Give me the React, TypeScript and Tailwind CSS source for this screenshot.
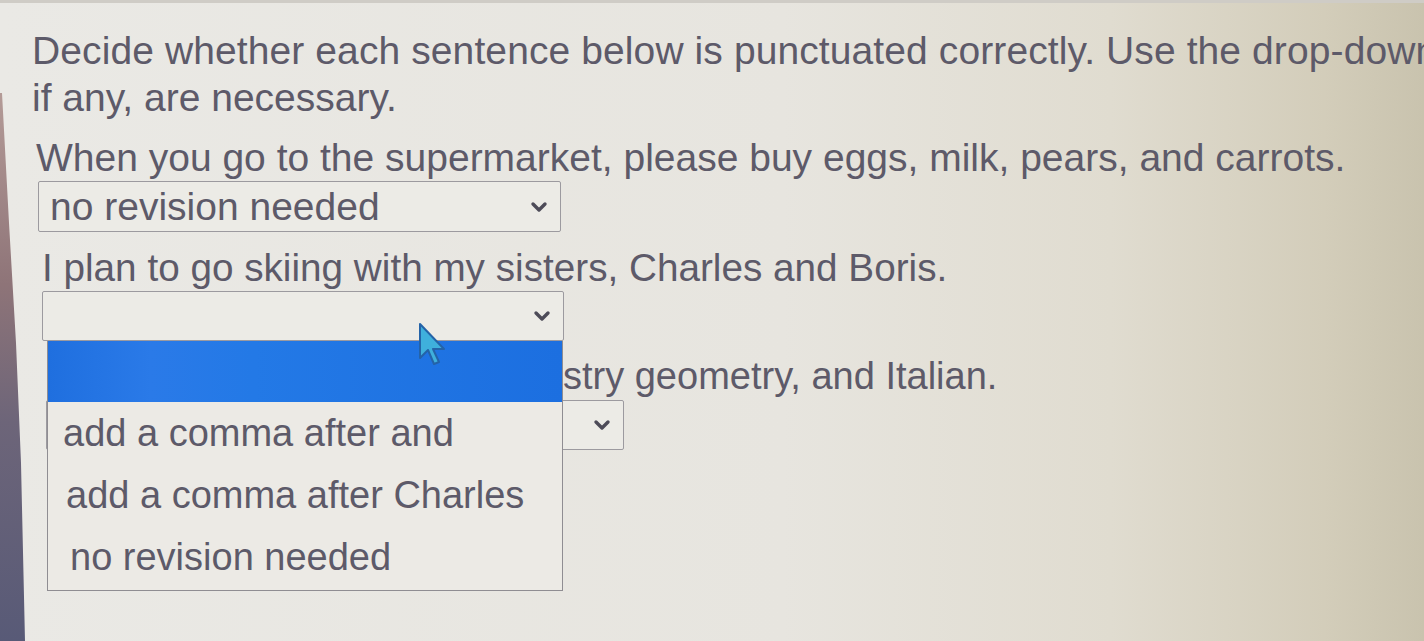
import React from 'react';

const Chevron = () => (
  <svg width="18" height="12" viewBox="0 0 18 12" className="shrink-0">
    <path d="M3 3 L9 9 L15 3" fill="none" stroke="#4d4b58" strokeWidth="3.4" strokeLinecap="round" strokeLinejoin="round" />
  </svg>
);

const Select = ({ value, className }: { value?: string; className: string }) => (
  <div className={`flex items-center justify-between border border-[#9c9a9f] rounded-[2px] bg-[#ecebe6] pl-[11px] pr-[12px] ${className}`}>
    <span className="text-[39px] leading-none text-[#5d5a69]">{value}</span>
    <Chevron />
  </div>
);

const options = [
  { label: 'add a comma after and', pad: 'pl-[15px]' },
  { label: 'add a comma after Charles', pad: 'pl-[18px]' },
  { label: 'no revision needed', pad: 'pl-[22px]' },
];

export default function App() {
  return (
    <div
      className="w-[1424px] h-[641px] overflow-hidden flex flex-col bg-[linear-gradient(90deg,#eae9e5_0%,#e7e5df_55%,#e0dcd0_78%,#d3cdba_93%,#c9c3ae_100%)]"
      style={{ fontFamily: '"Liberation Sans", Arial, sans-serif' }}
    >
      <div className="h-[3px] bg-[#cfccc6] shrink-0" />
      <div className="flex flex-1 min-h-0">
        {/* monitor bezel creeping in on the left */}
        <div className="w-[28px] shrink-0">
          <svg width="28" height="638" viewBox="0 0 28 638">
            <defs>
              <linearGradient id="bezel" x1="0" y1="0" x2="0" y2="1">
                <stop offset="0" stopColor="#b49b97" />
                <stop offset="0.35" stopColor="#8e7478" />
                <stop offset="0.6" stopColor="#6d6579" />
                <stop offset="1" stopColor="#585a77" />
              </linearGradient>
            </defs>
            <polygon points="0,90 2,90 9,220 16,340 21,460 25,638 0,638" fill="url(#bezel)" />
          </svg>
        </div>

        <div className="flex-1 flex flex-col pt-[24px] text-[39px] leading-[47px] text-[#5d5a69] whitespace-nowrap">
          <div className="ml-[4px] tracking-[0.1px]">
            Decide whether each sentence below is punctuated correctly. Use the drop-down menus to choose which revisions,
          </div>
          <div className="ml-[4px]">if any, are necessary.</div>

          <div className="ml-[8px] mt-[13px]">
            When you go to the supermarket, please buy eggs, milk, pears, and carrots.
          </div>
          <Select value="no revision needed" className="ml-[10px] w-[523px] h-[51px]" />

          <div className="ml-[14px] mt-[12px] text-[38.7px]">I plan to go skiing with my sisters, Charles and Boris.</div>

          <div className="relative ml-[14px] w-[522px] z-10">
            <Select className="w-[522px] h-[50px]" />
            {/* open option list */}
            <div className="absolute left-[5px] top-[50px] w-[516px] h-[250px] border border-[#8f8d92] border-t-0 bg-[#eceae5] flex flex-col">
              <div className="h-[61px] bg-[linear-gradient(90deg,#1f6fdf_0%,#2a7ae8_20%,#2379e6_40%,#1c6fe0_100%)] shrink-0" />
              {options.map((o) => (
                <div key={o.label} className={`h-[62px] flex items-center ${o.pad} text-[38px] text-[#5d5a69]`}>
                  {o.label}
                </div>
              ))}
            </div>
            {/* mouse pointer */}
            <svg className="absolute left-[376px] top-[31px]" width="32" height="48" viewBox="0 0 32 48">
              <path
                d="M2 2 L2 36 L10 28 L16 42 L21 40 L15 27 L26 27 Z"
                fill="#3fb0dc"
                stroke="#2463a8"
                strokeWidth="2"
                strokeLinejoin="round"
              />
            </svg>
          </div>

          <div className="ml-[33px] mt-[12px] text-[38px]">I am taking biology, art, chemistry geometry, and Italian.</div>
          <Select className="ml-[18px] w-[578px] h-[50px]" />
        </div>
      </div>
    </div>
  );
}
